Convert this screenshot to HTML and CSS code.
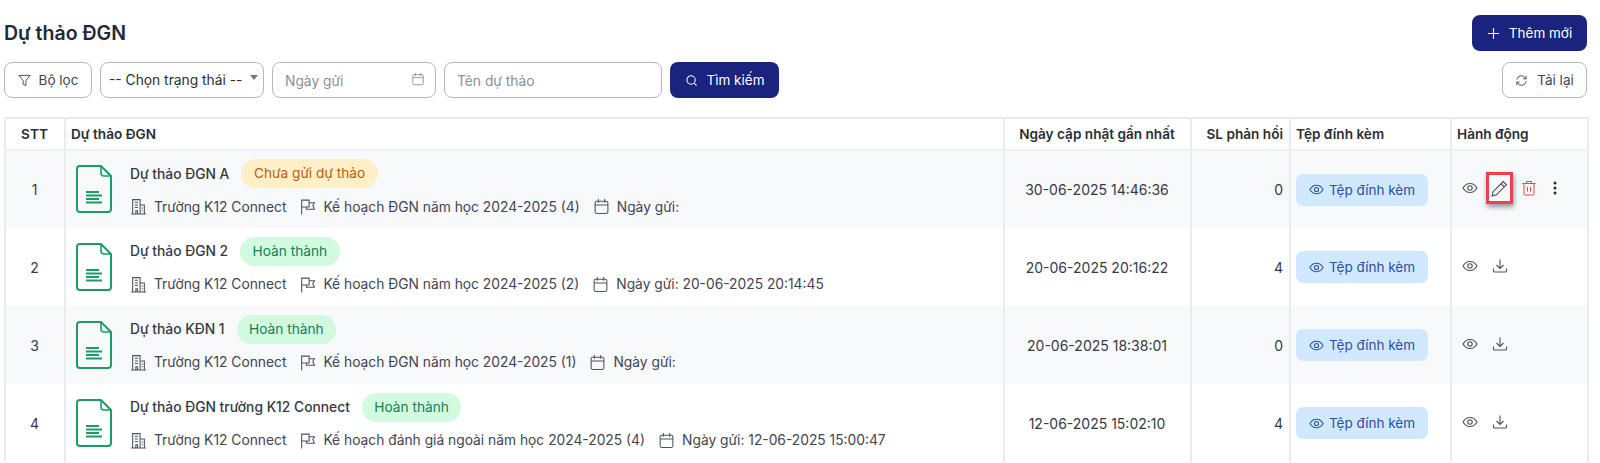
FILE: index.html
```html
<!DOCTYPE html>
<html lang="vi">
<head>
<meta charset="UTF-8">
<meta name="viewport" content="width=device-width, initial-scale=1.0">
<title>Dự thảo ĐGN</title>
<link rel="stylesheet" href="styles.css">
</head>
<body>
<svg class="defs" width="0" height="0">
    <symbol id="i-doc" viewBox="0 0 36 48">
        <path d="M4 1h21l10 10v33a3 3 0 0 1-3 3H4a3 3 0 0 1-3-3V4a3 3 0 0 1 3-3z" fill="none" stroke="currentColor" stroke-width="2" stroke-linejoin="round"/>
        <path d="M25 1v7a3 3 0 0 0 3 3h7" fill="none" stroke="currentColor" stroke-width="1.600"/>
        <path d="M10 27h13M10 30.500h16M10 34h13M10 37.500h16" fill="none" stroke="currentColor" stroke-width="1.800"/>
    </symbol>
    <symbol id="i-building" viewBox="0 0 16 16">
        <path d="M1 15h14M2.500 15V1.500h7V15M9.500 6.500H13.500V15M4.500 4h3M4.500 6.500h3M4.500 9h3M5.500 15v-3h1.500v3M11 9.500h1M11 12h1" fill="none" stroke="currentColor" stroke-width="1"/>
    </symbol>
    <symbol id="i-flag" viewBox="0 0 16 16">
        <path d="M2.500 15.500V1.500M2.500 2h7v6.500h-7M9.500 4.500h5l-1.500 2.500 1.500 3.500H7V8.500" fill="none" stroke="currentColor" stroke-width="1"/>
    </symbol>
    <symbol id="i-cal" viewBox="0 0 16 16">
        <rect x="2" y="3" width="12" height="11.500" rx="1.500" fill="none" stroke="currentColor" stroke-width="1"/>
        <path d="M2 6.500h12M5 1v3.500M11 1v3.500" fill="none" stroke="currentColor" stroke-width="1"/>
    </symbol>
    <symbol id="i-eye" viewBox="0 0 16 16">
        <path d="M1 8c1.700-3 4-4.500 7-4.500S13.300 5 15 8c-1.700 3-4 4.500-7 4.500S2.700 11 1 8z" fill="none" stroke="currentColor" stroke-width="1.100"/>
        <circle cx="8" cy="8" r="2.200" fill="none" stroke="currentColor" stroke-width="1.100"/>
    </symbol>
    <symbol id="i-down" viewBox="0 0 16 16">
        <path d="M8 1.500v9M4.500 7 8 10.500 11.500 7M1.500 10.500v2.500a1 1 0 0 0 1 1h11a1 1 0 0 0 1-1v-2.500" fill="none" stroke="currentColor" stroke-width="1.100"/>
    </symbol>
</svg>

<div class="page">
    <div class="title-row">
        <h1>Dự thảo ĐGN</h1>
        <button type="button" class="btn btn-primary btn-add">
            <svg class="btn-icon" viewBox="0 0 14 14"><path d="M7 1v12M1 7h12" fill="none" stroke="currentColor" stroke-width="1.200"/></svg>
            Thêm mới
        </button>
    </div>

    <div class="toolbar">
        <button type="button" class="btn btn-line btn-filter">
            <svg class="btn-icon" viewBox="0 0 14 14"><path d="M1 1.500h12L8.500 7v5.500l-3-1.500V7z" fill="none" stroke="currentColor"/></svg>
            Bộ lọc
        </button>
        <div class="field field-select"><span>-- Chọn trạng thái --</span><i class="caret"></i></div>
        <div class="field field-date">
            <span>Ngày gửi</span>
            <svg class="field-icon"><use href="#i-cal"/></svg>
        </div>
        <div class="field field-name"><span>Tên dự thảo</span></div>
        <button type="button" class="btn btn-primary btn-search">
            <svg class="btn-icon" viewBox="0 0 14 14"><circle cx="6.500" cy="6.500" r="4.500" fill="none" stroke="currentColor" stroke-width="1.100"/><path d="M10 10l2.500 2.500" stroke="currentColor" stroke-width="1.100"/></svg>
            Tìm kiếm
        </button>
        <button type="button" class="btn btn-line btn-reload">
            <svg class="btn-icon" viewBox="0 0 14 14"><path d="M2 6a5 5 0 0 1 9-2l1 1.200M12 8a5 5 0 0 1-9 2L2 8.800M12 2v3.200H9M2 12V8.800h3" fill="none" stroke="currentColor"/></svg>
            Tải lại
        </button>
    </div>

    <table class="grid">
        <colgroup>
            <col class="c-stt"><col class="c-name"><col class="c-date"><col class="c-count"><col class="c-file"><col class="c-act">
        </colgroup>
        <thead>
            <tr>
                <th class="center">STT</th>
                <th>Dự thảo ĐGN</th>
                <th class="center">Ngày cập nhật gần nhất</th>
                <th class="right">SL phản hồi</th>
                <th>Tệp đính kèm</th>
                <th>Hành động</th>
            </tr>
        </thead>
        <tbody>
            <tr>
                <td class="center">1</td>
                <td>
                    <div class="draft">
                        <svg class="doc"><use href="#i-doc"/></svg>
                        <div class="draft-body">
                            <div class="draft-top"><b>Dự thảo ĐGN A</b><span class="tag tag-wait">Chưa gửi dự thảo</span></div>
                            <div class="meta">
                                <svg><use href="#i-building"/></svg><span>Trường K12 Connect</span>
                                <svg><use href="#i-flag"/></svg><span>Kế hoạch ĐGN năm học 2024-2025 (4)</span>
                                <svg><use href="#i-cal"/></svg><span>Ngày gửi:</span>
                            </div>
                        </div>
                    </div>
                </td>
                <td class="center">30-06-2025 14:46:36</td>
                <td class="right">0</td>
                <td><span class="file-btn"><svg><use href="#i-eye"/></svg>Tệp đính kèm</span></td>
                <td>
                    <div class="actions">
                        <svg class="act"><use href="#i-eye"/></svg>
                        <span class="marked">
                            <svg class="act-pen" viewBox="0 0 16 16"><path d="M11.500 1.500l3 3-9.500 9.500-4 1 1-4zM9.500 3.500l3 3" fill="none" stroke="currentColor"/></svg>
                        </span>
                        <svg class="act act-del" viewBox="0 0 16 16"><path d="M1.500 3.500h13M5.500 3.500V1.500h5v2M3 3.500V14a1 1 0 0 0 1 1h8a1 1 0 0 0 1-1V3.500M6.500 7v4.500M9.500 7v4.500" fill="none" stroke="currentColor"/></svg>
                        <svg class="act act-more" viewBox="0 0 16 16"><circle cx="8" cy="3" r="1.500"/><circle cx="8" cy="8" r="1.500"/><circle cx="8" cy="13" r="1.500"/></svg>
                    </div>
                </td>
            </tr>
            <tr>
                <td class="center">2</td>
                <td>
                    <div class="draft">
                        <svg class="doc"><use href="#i-doc"/></svg>
                        <div class="draft-body">
                            <div class="draft-top"><b>Dự thảo ĐGN 2</b><span class="tag tag-done">Hoàn thành</span></div>
                            <div class="meta">
                                <svg><use href="#i-building"/></svg><span>Trường K12 Connect</span>
                                <svg><use href="#i-flag"/></svg><span>Kế hoạch ĐGN năm học 2024-2025 (2)</span>
                                <svg><use href="#i-cal"/></svg><span>Ngày gửi: 20-06-2025 20:14:45</span>
                            </div>
                        </div>
                    </div>
                </td>
                <td class="center">20-06-2025 20:16:22</td>
                <td class="right">4</td>
                <td><span class="file-btn"><svg><use href="#i-eye"/></svg>Tệp đính kèm</span></td>
                <td>
                    <div class="actions">
                        <svg class="act"><use href="#i-eye"/></svg>
                        <svg class="act"><use href="#i-down"/></svg>
                    </div>
                </td>
            </tr>
            <tr>
                <td class="center">3</td>
                <td>
                    <div class="draft">
                        <svg class="doc"><use href="#i-doc"/></svg>
                        <div class="draft-body">
                            <div class="draft-top"><b>Dự thảo KĐN 1</b><span class="tag tag-done">Hoàn thành</span></div>
                            <div class="meta">
                                <svg><use href="#i-building"/></svg><span>Trường K12 Connect</span>
                                <svg><use href="#i-flag"/></svg><span>Kế hoạch ĐGN năm học 2024-2025 (1)</span>
                                <svg><use href="#i-cal"/></svg><span>Ngày gửi:</span>
                            </div>
                        </div>
                    </div>
                </td>
                <td class="center">20-06-2025 18:38:01</td>
                <td class="right">0</td>
                <td><span class="file-btn"><svg><use href="#i-eye"/></svg>Tệp đính kèm</span></td>
                <td>
                    <div class="actions">
                        <svg class="act"><use href="#i-eye"/></svg>
                        <svg class="act"><use href="#i-down"/></svg>
                    </div>
                </td>
            </tr>
            <tr>
                <td class="center">4</td>
                <td>
                    <div class="draft">
                        <svg class="doc"><use href="#i-doc"/></svg>
                        <div class="draft-body">
                            <div class="draft-top"><b>Dự thảo ĐGN trường K12 Connect</b><span class="tag tag-done">Hoàn thành</span></div>
                            <div class="meta">
                                <svg><use href="#i-building"/></svg><span>Trường K12 Connect</span>
                                <svg><use href="#i-flag"/></svg><span>Kế hoạch đánh giá ngoài năm học 2024-2025 (4)</span>
                                <svg><use href="#i-cal"/></svg><span>Ngày gửi: 12-06-2025 15:00:47</span>
                            </div>
                        </div>
                    </div>
                </td>
                <td class="center">12-06-2025 15:02:10</td>
                <td class="right">4</td>
                <td><span class="file-btn"><svg><use href="#i-eye"/></svg>Tệp đính kèm</span></td>
                <td>
                    <div class="actions">
                        <svg class="act"><use href="#i-eye"/></svg>
                        <svg class="act"><use href="#i-down"/></svg>
                    </div>
                </td>
            </tr>
        </tbody>
    </table>
</div>
</body>
</html>
```

FILE: styles.css
```css
* {
    box-sizing: border-box;
}
html, body {
    height: 100%;
}
body {
    margin: 0;
    background-color: #fff;
    color: #2b2f36;
    font-family: Inter, "Noto Sans", sans-serif;
    font-size: 14px;
    overflow: hidden;
}
.defs {
    position: absolute;
}
.page {
    padding: 15px 13px 0 4px;
}
.title-row {
    display: flex;
    justify-content: space-between;
    align-items: center;
    height: 36px;
    margin-bottom: 11px;
}
h1 {
    margin: 0;
    font-size: 19.500px;
    font-weight: 600;
    color: #1f2937;
}
.btn {
    display: inline-flex;
    align-items: center;
    justify-content: center;
    gap: 9px;
    height: 36px;
    border-radius: 8px;
    font-family: inherit;
    font-size: 13.500px;
    cursor: pointer;
}
.btn-icon {
    width: 13px;
    height: 13px;
    flex: none;
}
.btn-primary {
    background-color: #1a237e;
    border: none;
    color: #fff;
    font-weight: 400;
}
.btn-line {
    background-color: #fff;
    border: 1px solid #b5b8bd;
    color: #3f4550;
}
.btn-add {
    width: 115px;
}
.btn-filter {
    width: 88px;
    gap: 8px;
}
.btn-search {
    width: 109px;
}
.btn-reload {
    width: 85px;
    margin-left: auto;
}
.toolbar {
    display: flex;
    gap: 8px;
    margin-bottom: 19px;
}
.field {
    display: flex;
    align-items: center;
    justify-content: space-between;
    height: 36px;
    padding: 2px 10px 0 12px;
    background-color: #fff;
    border: 1px solid #b5b8bd;
    border-radius: 8px;
    font-size: 13.800px;
    color: #8a8f98;
}
.field-select {
    width: 164px;
    padding: 0 5px 0 8px;
    color: #2b2f36;
}
.field-date {
    width: 164px;
}
.field-name {
    width: 218px;
}
.field-icon {
    width: 14px;
    height: 14px;
    margin-bottom: 4px;
}
.caret {
    margin-bottom: 5px;
    border-left: 4px solid transparent;
    border-right: 4px solid transparent;
    border-top: 5px solid #777;
}
.grid {
    width: 1583px;
    table-layout: fixed;
    border-collapse: collapse;
    border: 2px solid #e9ebee;
    border-bottom: none;
}
.c-stt { width: 60px; }
.c-name { width: 939px; }
.c-date { width: 187px; }
.c-count { width: 99px; }
.c-file { width: 161px; }
.c-act { width: 137px; }
.grid th {
    height: 32px;
    padding: 0 6px 0 5px;
    font-size: 13.600px;
    font-weight: 600;
    text-align: left;
    border-left: 2px solid #e9ebee;
    border-bottom: 2px solid #eef0f3;
    color: #2b2f36;
}
.grid td {
    height: 78px;
    padding: 0 6px 0 5px;
    font-size: 14px;
    border-left: 2px solid #e9ebee;
    color: #343a44;
}
.grid tbody tr:nth-child(odd) {
    background-color: #f8f9fb;
}
.grid th.center, .grid td.center {
    text-align: center;
}
.grid th.right, .grid td.right {
    text-align: right;
}
.draft {
    display: flex;
    align-items: flex-start;
    gap: 18px;
    padding-left: 5px;
}
.doc {
    width: 36px;
    height: 48px;
    margin-top: 1px;
    color: #1a9e63;
    flex: none;
}
.draft-body {
    margin-top: -5px;
}
.draft-top {
    display: flex;
    align-items: center;
    gap: 12px;
    height: 29px;
}
.draft-top b {
    font-size: 13.800px;
    font-weight: 500;
    color: #343a44;
}
.tag {
    display: inline-block;
    height: 29px;
    line-height: 29px;
    padding: 0 12.500px;
    border-radius: 15px;
    font-size: 13.700px;
}
.tag-wait {
    background-color: #feefc7;
    color: #b4610f;
}
.tag-done {
    background-color: #d1fadf;
    color: #12805c;
}
.meta {
    display: flex;
    align-items: center;
    gap: 7px;
    margin-top: 10px;
    font-size: 13.800px;
    color: #3f4550;
    white-space: nowrap;
}
.meta svg {
    width: 17px;
    height: 17px;
    flex: none;
    color: #4b5260;
}
.meta span {
    margin-right: 6px;
}
.file-btn {
    display: inline-flex;
    align-items: center;
    justify-content: center;
    gap: 5px;
    width: 132px;
    height: 32px;
    border-radius: 7px;
    background-color: #d1e9ff;
    color: #2a4fa8;
    font-size: 13.500px;
}
.file-btn svg {
    width: 15px;
    height: 15px;
    flex: none;
}
.actions {
    display: flex;
    align-items: center;
    gap: 14px;
    padding: 0 0 3px 5px;
}
.act {
    width: 16px;
    height: 16px;
    color: #4b5260;
    flex: none;
}
.act-pen {
    width: 17px;
    height: 17px;
    color: #3f4550;
}
.act-del {
    color: #e5484d;
}
.act-more {
    fill: #2b2f36;
    margin-left: -4px;
}
.marked {
    display: flex;
    align-items: center;
    justify-content: center;
    width: 27px;
    height: 32px;
    margin: 0 -6px;
    border: 3px solid #f0414a;
    box-shadow: 1px 3px 5px rgba(0, 0, 0, 0.4);
}
```
